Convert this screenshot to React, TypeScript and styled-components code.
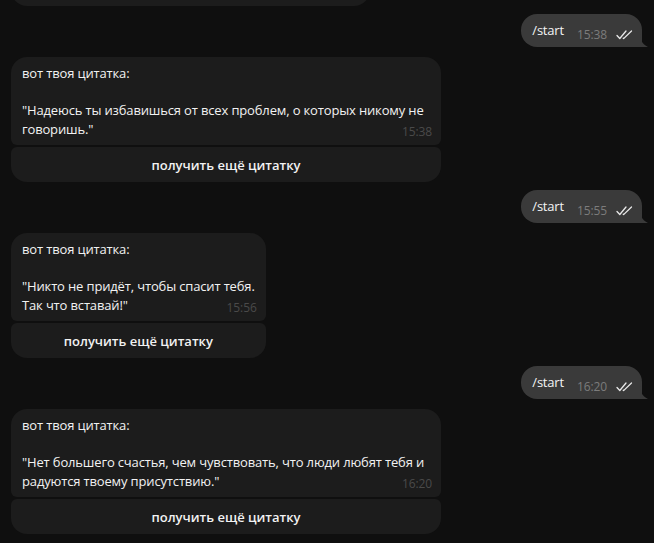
import React from "react";
import styled, { createGlobalStyle } from "styled-components";

const Global = createGlobalStyle`
  html, body { margin: 0; padding: 0; background: #0f0f0f; }
  body { font-family: "Open Sans", "Noto Sans", sans-serif; color: #f2f2f2; overflow: hidden; }
`;

const Chat = styled.div`
  width: 654px;
  height: 543px;
  box-sizing: border-box;
  padding: 0 12px 0 11px;
  display: flex;
  flex-direction: column;
  gap: 8px;
  overflow: hidden;
`;

const CutButton = styled.div`
  width: 359px;
  height: 35px;
  margin-top: -29px;
  border-radius: 6px 6px 16px 16px;
  background: #1c1c1c;
  font-size: 13px;
  font-weight: 600;
  line-height: 35px;
  text-align: center;
  color: #f2f2f2;
`;

const OutRow = styled.div`
  display: flex;
  justify-content: flex-end;
  margin-bottom: 2px;
`;

const OutBubble = styled.div`
  position: relative;
  display: flex;
  align-items: flex-start;
  height: 33px;
  box-sizing: border-box;
  padding: 7px 8px 0 11px;
  background: #3a3a3a;
  border-radius: 16px 16px 0 16px;
  font-size: 13px;
  line-height: 19px;
  letter-spacing: -0.2px;
`;

const Tail = styled.svg`
  position: absolute;
  right: -6px;
  bottom: 0;
  width: 8px;
  height: 14px;
`;

const OutText = styled.span`
  color: #f4f4f4;
`;

const Meta = styled.span`
  display: flex;
  align-items: center;
  gap: 9px;
  margin-left: 13px;
  margin-top: 4px;
  font-size: 12px;
  letter-spacing: -0.1px;
  color: #7c7c7c;
`;

const InGroup = styled.div`
  display: flex;
  flex-direction: column;
  gap: 2px;
  width: fit-content;
  max-width: 430px;
`;

const InBubble = styled.div<{ $w?: number }>`
  position: relative;
  box-sizing: border-box;
  width: ${(p) => (p.$w ? `${p.$w}px` : "auto")};
  padding: 7px 11px 6px 11px;
  background: #1c1c1c;
  border-radius: 16px 16px 6px 6px;
  font-size: 13px;
  line-height: 19px;
  letter-spacing: -0.15px;
  color: #f2f2f2;
`;

const Header = styled.div``;

const Quote = styled.div`
  margin-top: 18px;
  width: fit-content;
  white-space: pre;
`;

const Time = styled.span`
  position: absolute;
  right: 9px;
  bottom: 5px;
  font-size: 12px;
  line-height: 16px;
  letter-spacing: -0.1px;
  color: #4a4a4a;
`;

const KbButton = styled.button`
  height: 35px;
  border: 0;
  padding: 0;
  border-radius: 6px 6px 16px 16px;
  background: #1c1c1c;
  font-family: "Open Sans", "Noto Sans", sans-serif;
  font-size: 13px;
  font-weight: 600;
  color: #f2f2f2;
  text-align: center;
`;

const Checks = () => (
  <svg width="18" height="10" viewBox="0 0 18 10" fill="none">
    <path d="M1 5.5 L3.8 8.5 L10 1" stroke="#e8e8e8" strokeWidth="1.3" strokeLinecap="round" strokeLinejoin="round" />
    <path d="M7.2 8.3 L7.6 8.6 L15.5 1" stroke="#e8e8e8" strokeWidth="1.3" strokeLinecap="round" strokeLinejoin="round" />
  </svg>
);

const Outgoing = ({ time }: { time: string }) => (
  <OutRow>
    <OutBubble>
      <OutText>/start</OutText>
      <Meta>
        {time}
        <Checks />
      </Meta>
      <Tail viewBox="0 0 8 14">
        <path d="M0 0 C0 7 2 11 8 14 L0 14 Z" fill="#3a3a3a" />
      </Tail>
    </OutBubble>
  </OutRow>
);

const Incoming = ({ quote, time, w }: { quote: string; time: string; w?: number }) => (
  <InGroup>
    <InBubble $w={w}>
      <Header>вот твоя цитатка:</Header>
      <Quote>{quote}</Quote>
      <Time>{time}</Time>
    </InBubble>
    <KbButton>получить ещё цитатку</KbButton>
  </InGroup>
);

export default function App() {
  return (
    <>
      <Global />
      <Chat>
        <CutButton>получить ещё цитатку</CutButton>
        <Outgoing time="15:38" />
        <Incoming
          w={430}
          time="15:38"
          quote={'"Надеюсь ты избавишься от всех проблем, о которых никому не\nговоришь."'}
        />
        <Outgoing time="15:55" />
        <Incoming time="15:56" quote={'"Никто не придёт, чтобы спасит тебя.\nТак что вставай!"'} />
        <Outgoing time="16:20" />
        <Incoming
          w={430}
          time="16:20"
          quote={'"Нет большего счастья, чем чувствовать, что люди любят тебя и\nрадуются твоему присутствию."'}
        />
      </Chat>
    </>
  );
}
